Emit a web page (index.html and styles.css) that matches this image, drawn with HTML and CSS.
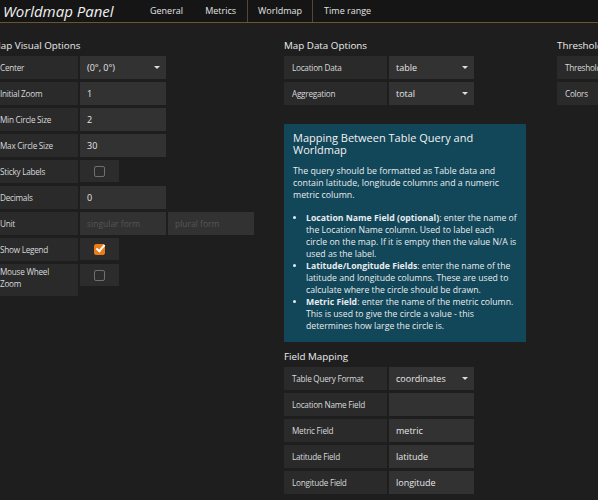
FILE: index.html
```html
<!DOCTYPE html>
<html lang="en">
<head>
	<meta charset="UTF-8">
	<title>Worldmap Panel</title>
<link rel="stylesheet" href="styles.css">
</head>
<body>
<div class="navbar">
	<span class="navbar-title">Worldmap Panel</span>
	<ul class="tabs">
		<li>General</li>
		<li>Metrics</li>
		<li class="active">Worldmap</li>
		<li>Time range</li>
	</ul>
</div>

<div class="editor">
	<div class="section visual">
		<h5>Map Visual Options</h5>
		<div class="gf-form"><span class="label">Center</span><span class="input select">(0°, 0°)</span></div>
		<div class="gf-form"><span class="label">Initial Zoom</span><span class="input">1</span></div>
		<div class="gf-form"><span class="label">Min Circle Size</span><span class="input">2</span></div>
		<div class="gf-form"><span class="label">Max Circle Size</span><span class="input">30</span></div>
		<div class="gf-form"><span class="label">Sticky Labels</span><span class="check-box"><i class="check"></i></span></div>
		<div class="gf-form"><span class="label">Decimals</span><span class="input">0</span></div>
		<div class="gf-form"><span class="label">Unit</span><span class="input placeholder">singular form</span><span class="input placeholder">plural form</span></div>
		<div class="gf-form"><span class="label">Show Legend</span><span class="check-box"><i class="check on"></i></span></div>
		<div class="gf-form"><span class="label tall">Mouse Wheel Zoom</span><span class="check-box"><i class="check"></i></span></div>
	</div>

	<div class="section data">
		<h5>Map Data Options</h5>
		<div class="gf-form"><span class="label">Location Data</span><span class="input select">table</span></div>
		<div class="gf-form"><span class="label">Aggregation</span><span class="input select">total</span></div>

		<div class="info-box">
			<h4>Mapping Between Table Query and Worldmap</h4>
			<p>The query should be formatted as Table data and contain latitude, longitude columns and a numeric metric column.</p>
			<ul>
				<li><b>Location Name Field (optional)</b>: enter the name of<br>the Location Name column. Used to label each circle on the map. If it is empty then the value N/A is used as the label.</li>
				<li><b>Latitude/Longitude Fields</b>: enter the name of the latitude and longitude columns. These are used to calculate where the circle should be drawn.</li>
				<li><b>Metric Field</b>: enter the name of the metric column. This is used to give the circle a value - this determines how large the circle is.</li>
			</ul>
		</div>

		<h5 class="sub">Field Mapping</h5>
		<div class="gf-form"><span class="label">Table Query Format</span><span class="input select">coordinates</span></div>
		<div class="gf-form"><span class="label">Location Name Field</span><span class="input"></span></div>
		<div class="gf-form"><span class="label">Metric Field</span><span class="input">metric</span></div>
		<div class="gf-form"><span class="label">Latitude Field</span><span class="input">latitude</span></div>
		<div class="gf-form"><span class="label">Longitude Field</span><span class="input">longitude</span></div>
	</div>

	<div class="section thresholds">
		<h5>Thresholds</h5>
		<div class="gf-form"><span class="label">Thresholds</span><span class="input"></span></div>
		<div class="gf-form"><span class="label">Colors</span><span class="input"></span></div>
	</div>
</div>
</body>
</html>
```

FILE: styles.css
```css
html,body,ul,li,h4,h5,p{
	margin:0;
	padding:0;
}
body{
	background:#1f1e1f;
	color:#d8d9da;
	font-family:"Open Sans","Liberation Sans",sans-serif;
	font-size:9px;
	overflow:hidden;
}
li{
	list-style:none;
}

/* top bar */
.navbar{
	height:22px;
	background:#151515;
	border-bottom:1px solid #6d5330;
	display:flex;
	align-items:center;
}
.navbar-title{
	font-size:15px;
	font-style:italic;
	color:#f0f0f0;
	padding-left:3px;
	width:136px;
	white-space:nowrap;
}
.tabs{
	display:flex;
	height:22px;
}
.tabs li{
	padding:0 10px;
	line-height:22px;
	font-size:9px;
	color:#e3e3e3;
	border-left:1px solid transparent;
	border-right:1px solid transparent;
}
.tabs .active{
	border-color:#5a4630;
}

/* editor */
.editor{
	display:flex;
	margin-left:-8px;
	padding-top:16px;
}
.section{
	flex-shrink:0;
}
.section h5{
	font-size:9.8px;
	font-weight:normal;
	color:#ececec;
	height:17px;
	line-height:14px;
}
.visual{
	width:292px;
}
.data{
	width:273px;
}
.gf-form{
	display:flex;
	margin-bottom:3px;
}
.label{
	background:#2a2a2a;
	height:23px;
	line-height:23px;
	padding:0 8px;
	width:70px;
	margin-right:2px;
	font-size:8.2px;
	letter-spacing:-0.25px;
	color:#d8d9da;
	white-space:nowrap;
}
.label.tall{
	height:30px;
	line-height:12px;
	padding-top:2px;
	white-space:normal;
	margin-bottom:-6px;
}
.input{
	background:#333233;
	height:23px;
	line-height:23px;
	padding:0 7px;
	width:72px;
	margin-right:2px;
	color:#e6e6e6;
	font-size:9px;
	position:relative;
}
.placeholder{
	color:#555;
	font-size:8.5px;
}
.select:after{
	content:"";
	position:absolute;
	right:6px;
	top:10px;
	border-left:3px solid transparent;
	border-right:3px solid transparent;
	border-top:3px solid #ddd;
}
.check-box{
	background:#2d2c2d;
	width:39px;
	height:22px;
	display:flex;
	align-items:center;
	justify-content:center;
}
.check{
	width:9px;
	height:9px;
	border:1px solid #707070;
	border-radius:2px;
	position:relative;
}
.check.on{
	background:#eb7b18;
	border-color:#eb7b18;
}
.check.on:after{
	content:"";
	position:absolute;
	left:3px;
	top:-2px;
	width:3px;
	height:7px;
	border:solid #fff;
	border-width:0 2px 2px 0;
	transform:rotate(40deg);
}

.data .label{
	width:87px;
}
.data .input{
	width:71px;
}

.info-box{
	background:#124659;
	color:#e8ecef;
	width:224px;
	margin:19px 0 8px;
	padding:8px 9px 10px;
	font-size:8.8px;
	line-height:12px;
}
.info-box h4{
	font-size:11px;
	font-weight:normal;
	line-height:12px;
	margin-bottom:9px;
	color:#f2f2f2;
}
.info-box p{
	margin-bottom:11px;
}
.info-box ul{
	padding-left:13px;
}
.info-box li{
	list-style:disc;
	font-size:8.7px;
}

.thresholds .label{
	width:60px;
}
```
